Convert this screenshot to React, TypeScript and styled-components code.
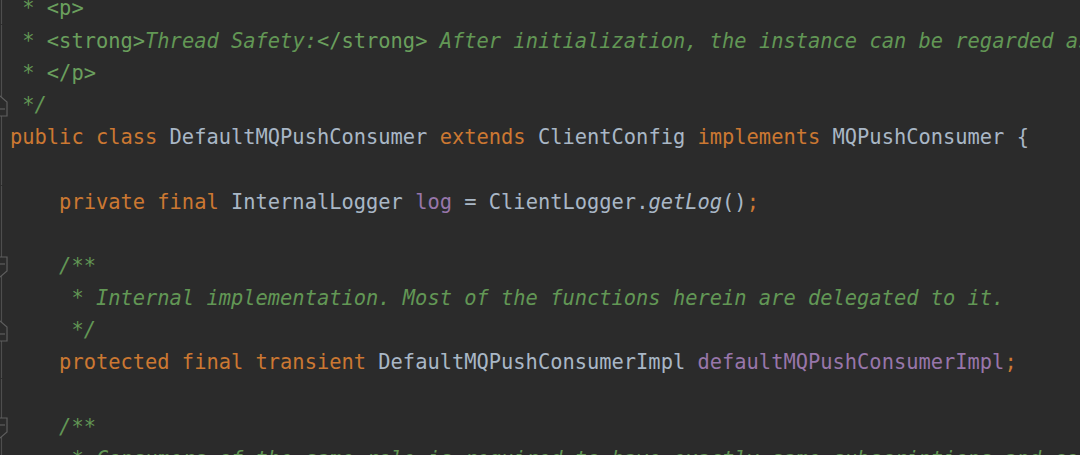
import React from 'react';
import styled, {createGlobalStyle} from "styled-components";

type Kind = "kw" | "txt" | "field" | "doc" | "tag" | "call" | "semi";
type Token = [Kind, string];
type Fold = "start" | "end" | undefined;

interface CodeLine {
    fold?: Fold;
    tokens: Token[];
}

const ROW = 32.2;

const colors: Record<Kind, string> = {
    kw: "#cc7832",
    txt: "#a9b7c6",
    field: "#9876aa",
    doc: "#629755",
    tag: "#6a9f5d",
    call: "#a9b7c6",
    semi: "#cc7832",
};

const lines: CodeLine[] = [
    {tokens: [["doc", " * "], ["tag", "<p>"]]},
    {
        tokens: [["doc", " * "], ["tag", "<strong>"], ["doc", "Thread Safety:"], ["tag", "</strong>"],
            ["doc", " After initialization, the instance can be regarded as thread-safe."]]
    },
    {tokens: [["doc", " * "], ["tag", "</p>"]]},
    {fold: "end", tokens: [["doc", " */"]]},
    {
        tokens: [["kw", "public class "], ["txt", "DefaultMQPushConsumer "], ["kw", "extends "],
            ["txt", "ClientConfig "], ["kw", "implements "], ["txt", "MQPushConsumer {"]]
    },
    {tokens: []},
    {
        tokens: [["txt", "    "], ["kw", "private final "], ["txt", "InternalLogger "], ["field", "log"],
            ["txt", " = ClientLogger."], ["call", "getLog"], ["txt", "()"], ["semi", ";"]]
    },
    {tokens: []},
    {fold: "start", tokens: [["doc", "    /**"]]},
    {tokens: [["doc", "     * Internal implementation. Most of the functions herein are delegated to it."]]},
    {fold: "end", tokens: [["doc", "     */"]]},
    {
        tokens: [["txt", "    "], ["kw", "protected final transient "], ["txt", "DefaultMQPushConsumerImpl "],
            ["field", "defaultMQPushConsumerImpl"], ["semi", ";"]]
    },
    {tokens: []},
    {fold: "start", tokens: [["doc", "    /**"]]},
    {
        tokens: [["doc", "     * Consumers of the same role is required to have exactly same subscriptions and consumerGroup to correctly achieve load balance."]]
    },
];

const GlobalStyle = createGlobalStyle`
  body {
    margin: 0;
    background: #2b2b2b;
  }
`

const Editor = styled.div`
  width: 1080px;
  height: 455px;
  overflow: hidden;
  background-color: #2b2b2b;
`

const Rows = styled.div`
  margin-top: -7.6px;
`

const Row = styled.div`
  display: flex;
  height: ${ROW}px;
`

const GutterSvg = styled.svg`
  flex-shrink: 0;
  width: 10px;
  height: ${ROW}px;
`

const Code = styled.pre`
  margin: 0;
  white-space: pre;
  font-family: "DejaVu Sans Mono", "Liberation Mono", monospace;
  font-size: 20.4px;
  line-height: ${ROW}px;
`

const Tok = styled.span<{ $kind: Kind }>`
  color: ${p => colors[p.$kind]};
  font-style: ${p => (p.$kind === "doc" || p.$kind === "call") ? "italic" : "normal"};
`

const Gutter = ({fold}: { fold: Fold }) => {
    const c = 17;
    let marker = null;
    if (fold === "end") {
        marker = <>
            <path d={`M-7 ${c - 4} L0 ${c - 10} L7 ${c - 4} L7 ${c + 10} L-7 ${c + 10} Z`}
                  fill="#2b2b2b" stroke="#5e5e5e" strokeWidth="1.2"/>
            <line x1="-4" x2="5" y1={c + 3} y2={c + 3} stroke="#5e5e5e" strokeWidth="1.2"/>
        </>;
    } else if (fold === "start") {
        marker = <>
            <path d={`M-7 ${c - 10} L7 ${c - 10} L7 ${c + 4} L0 ${c + 10} L-7 ${c + 4} Z`}
                  fill="#2b2b2b" stroke="#5e5e5e" strokeWidth="1.2"/>
            <line x1="-4" x2="5" y1={c - 3} y2={c - 3} stroke="#5e5e5e" strokeWidth="1.2"/>
        </>;
    }
    return (
        <GutterSvg viewBox={`0 0 10 ${ROW}`} overflow="visible">
            <line x1="1.5" x2="1.5" y1="0" y2={ROW} stroke="#4e4e4e" strokeWidth="1.2"/>
            {marker}
        </GutterSvg>
    );
};

const App = () => {
    return (
        <Editor>
            <GlobalStyle/>
            <Rows>
                {lines.map((line, i) => (
                    <Row key={i}>
                        <Gutter fold={line.fold}/>
                        <Code>
                            {line.tokens.map(([kind, text], j) => (
                                <Tok key={j} $kind={kind}>{text}</Tok>
                            ))}
                        </Code>
                    </Row>
                ))}
            </Rows>
        </Editor>
    );
};

export default App;
